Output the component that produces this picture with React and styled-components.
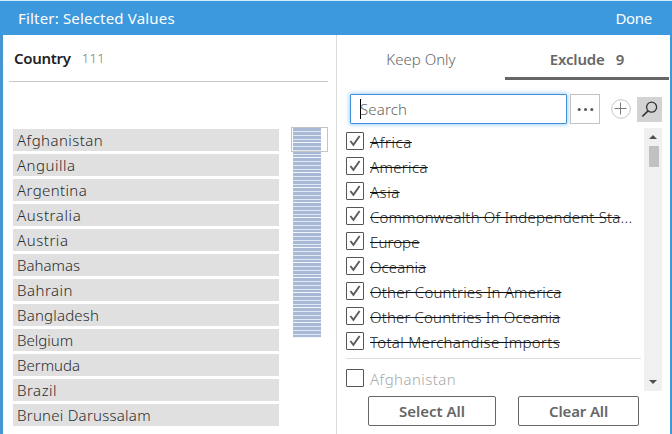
import React from "react";
import styled, { createGlobalStyle } from "styled-components";

const Global = createGlobalStyle`
  * { box-sizing: border-box; }
  body { margin: 0; background: #fff; overflow: hidden; }
  button, input { font-family: inherit; }
`;

const Dialog = styled.div`
  width: 672px;
  height: 434px;
  display: flex;
  flex-direction: column;
  border-top: 1px solid #cdf0fb;
  background: #fff;
  font-family: "Noto Sans", "Open Sans", sans-serif;
  font-size: 15px;
  color: #2c2c2c;
  overflow: hidden;
  white-space: nowrap;
`;

const Header = styled.header`
  height: 34px;
  flex: none;
  display: flex;
  justify-content: space-between;
  align-items: center;
  padding: 0 20px 0 18px;
  background: #3d99dd;
  color: #fff;
`;

const Txt = styled.span`
  display: block;
  flex: none;
  font-size: ${(p) => p.$size || 15}px;
  font-weight: ${(p) => p.$weight || 300};
  letter-spacing: ${(p) => p.$ls || 0}px;
  color: ${(p) => p.$color || "inherit"};
`;

const Struck = styled(Txt)`
  text-decoration: line-through #111 1px;
`;

const Body = styled.main`
  flex: 1;
  min-height: 0;
  display: flex;
  border-left: 3px solid #4596d0;
  border-right: 2px solid #3d99d6;
`;

const Left = styled.section`
  width: 333px;
  flex: none;
  padding: 0 8px 0 6px;
`;

const Title = styled.div`
  height: 47px;
  display: flex;
  align-items: center;
  gap: 11px;
  padding: 0 0 0 5px;
  border-bottom: 1px solid #c8c8c8;
`;

const Preview = styled.div`
  display: flex;
  align-items: flex-start;
  padding: 47px 0 0 4px;
`;

const Values = styled.ul`
  width: 266px;
  margin: 0;
  padding: 0;
  list-style: none;
  display: grid;
  gap: 3px;
`;

const Value = styled.li`
  height: 22px;
  display: flex;
  align-items: center;
  padding: 0 0 0 4px;
  background: #e0e0e0;
`;

const MiniMap = styled.div`
  position: relative;
  width: 28px;
  height: 210px;
  margin: -1px 0 0 14px;
  background: repeating-linear-gradient(
    #a7b9d4 0 3px, #dfe8f4 3px 4px,
    #a7b9d4 4px 7px, #dfe8f4 7px 8px,
    #a7b9d4 8px 11px, #dfe8f4 11px 12px,
    #a7b9d4 12px 14px, #f3f7fc 14px 15px
  );
`;

const Viewport = styled.div`
  position: absolute;
  left: -2px;
  top: -1px;
  width: 37px;
  height: 25px;
  border: 1px solid #c4c4c4;
`;

const Right = styled.section`
  flex: 1;
  min-width: 0;
  border-left: 1px solid #dcdcdc;
  display: flex;
  flex-direction: column;
`;

const Tabs = styled.div`
  height: 45px;
  flex: none;
  display: grid;
  grid-template-columns: 168px 164px;
`;

const Tab = styled.button`
  border: 0;
  border-bottom: 3px solid ${(p) => (p.$active ? "#666" : "transparent")};
  background: none;
  padding: 6px 0 0;
  display: flex;
  align-items: center;
  justify-content: center;
  gap: 11px;
  color: #666;
`;

const Tools = styled.div`
  display: flex;
  align-items: center;
  flex: none;
  height: 30px;
  margin: 14px 0 0 13px;
`;

const SearchBox = styled.div`
  width: 217px;
  height: 30px;
  display: flex;
  align-items: center;
  padding-left: 9px;
  border: 1px solid #3c8fd8;
  border-radius: 1px;
  box-shadow: 0 0 4px 1px #a6d4f8;
`;

const Caret = styled.i`
  width: 1px;
  height: 20px;
  margin-right: -1px;
  background: #000;
`;

const More = styled.button`
  width: 30px;
  height: 30px;
  margin-left: 3px;
  padding: 0;
  border: 1px solid #c2c2c2;
  background: #fff;
`;

const Add = styled.button`
  width: 20px;
  height: 20px;
  margin-left: 11px;
  padding: 0;
  border: 0;
  background: none;
`;

const Find = styled.button`
  width: 25px;
  height: 25px;
  margin-left: 6px;
  padding: 0;
  border: 0;
  background: #d3d3d3;
`;

const Icon = styled.svg`
  display: block;
  fill: none;
`;

const ListArea = styled.div`
  height: 264px;
  flex: none;
  margin-top: 4px;
  display: flex;
  padding: 0 8px 0 9px;
`;

const Options = styled.div`
  width: 295px;
  padding-top: 4px;
`;

const Option = styled.label`
  height: 25px;
  display: flex;
  align-items: flex-start;
  line-height: 21px;
  color: ${(p) => (p.$dim ? "#a8a8a8" : "#222")};
`;

const Box = styled.span`
  width: 18px;
  height: 18px;
  flex: none;
  margin-right: 6px;
  border: 1px solid #555;
  border-radius: 1px;
  background: #fff;
`;

const Rule = styled.hr`
  height: 1px;
  margin: 1px 0 10px;
  border: 0;
  background: #dedede;
`;

const ScrollBar = styled.div`
  width: 18px;
  height: 263px;
  margin-left: 3px;
  background: #f0f0f0;
  display: flex;
  flex-direction: column;
  align-items: center;
`;

const Arrow = styled.i`
  width: 0;
  height: 0;
  margin: ${(p) => (p.$down ? "auto 0 7px" : "7px 0 7px")};
  border: 4px solid transparent;
  border-${(p) => (p.$down ? "top" : "bottom")}: 4px solid #505050;
  border-${(p) => (p.$down ? "bottom" : "top")}: 0;
`;

const Thumb = styled.div`
  width: 10px;
  height: 21px;
  margin-left: 2px;
  background: #c1c1c1;
`;

const Actions = styled.div`
  display: flex;
  flex: none;
  margin: 4px 0 0 31px;
  gap: 22px;
`;

const Action = styled.button`
  width: ${(p) => p.$w}px;
  height: 30px;
  padding: 0;
  display: flex;
  align-items: center;
  justify-content: center;
  border: 1px solid #666;
  border-radius: 2px;
  background: #fff;
  color: #666;
`;

// Each entry pairs a label with its tracking in pixels.
const countries = [
  ["Afghanistan", 0.45], ["Anguilla", 0.5], ["Argentina", 0.38],
  ["Australia", 0.6], ["Austria", 0.55], ["Bahamas", 0],
  ["Bahrain", 0.5], ["Bangladesh", 0.2], ["Belgium", 0],
  ["Bermuda", 0], ["Brazil", 0.5], ["Brunei Darussalam", 0.25],
];

const excluded = [
  ["Africa", 0.6], ["America", 0.35], ["Asia", 0.5],
  ["Commonwealth Of Independent Sta", 0.17, "..."],
  ["Europe", 0.1], ["Oceania", 0.1], ["Other Countries In America", 0.2],
  ["Other Countries In Oceania", 0.15], ["Total Merchandise Imports", 0.32],
];

function Check({ checked }) {
  return (
    <Box>
      {checked && (
        <Icon width="16" height="16" viewBox="0 0 16 16">
          <path d="M3.4 8 6.4 11.8 12.6 3" stroke="#5c5c5c" strokeWidth="1.9" />
        </Icon>
      )}
    </Box>
  );
}

export default function App() {
  return (
    <Dialog>
      <Global />
      <Header>
        <Txt $weight={400} $ls={0.18}>Filter: Selected Values</Txt>
        <Txt $weight={400} $ls={-0.3}>Done</Txt>
      </Header>
      <Body>
        <Left>
          <Title>
            <Txt $weight={600} $ls={-0.3} $color="#222">Country</Txt>
            <Txt $size={13} $ls={0.3} $color="#777">111</Txt>
          </Title>
          <Preview>
            <Values>
              {countries.map(([name, ls]) => (
                <Value key={name}><Txt $ls={ls}>{name}</Txt></Value>
              ))}
            </Values>
            <MiniMap><Viewport /></MiniMap>
          </Preview>
        </Left>
        <Right>
          <Tabs>
            <Tab><Txt $color="#666">Keep Only</Txt></Tab>
            <Tab $active>
              <Txt $weight={600} $ls={-0.15}>Exclude</Txt>
              <Txt $weight={600}>9</Txt>
            </Tab>
          </Tabs>
          <Tools>
            <SearchBox><Caret /><Txt $ls={0.15} $color="#666">Search</Txt></SearchBox>
            <More>
              <Icon width="28" height="28" viewBox="0 0 28 28">
                <g fill="#555">
                  <circle cx="8.2" cy="14.5" r="1.5" />
                  <circle cx="14.5" cy="14.5" r="1.5" />
                  <circle cx="20.8" cy="14.5" r="1.5" />
                </g>
              </Icon>
            </More>
            <Add>
              <Icon width="20" height="20" viewBox="0 0 20 20">
                <circle cx="10" cy="10" r="9.3" stroke="#c4c4c4" />
                <path d="M3.5 9.5h12M9.5 3.5v12" stroke="#777" />
              </Icon>
            </Add>
            <Find>
              <Icon width="25" height="25" viewBox="0 0 25 25">
                <circle cx="14.6" cy="10.2" r="5" stroke="#333" strokeWidth="1.3" />
                <path d="m11 13.8-5.7 5.7" stroke="#333" strokeWidth="1.7" />
              </Icon>
            </Find>
          </Tools>
          <ListArea>
            <Options>
              {excluded.map(([name, ls, tail]) => (
                <Option key={name}>
                  <Check checked />
                  <Struck as="s" $ls={ls}>{name}</Struck>
                  {tail && <Txt $ls={0.3}>{tail}</Txt>}
                </Option>
              ))}
              <Rule />
              <Option $dim><Check /><Txt $ls={0.45}>Afghanistan</Txt></Option>
            </Options>
            <ScrollBar><Arrow /><Thumb /><Arrow $down /></ScrollBar>
          </ListArea>
          <Actions>
            <Action $w={128}><Txt $weight={600}>Select All</Txt></Action>
            <Action $w={121}><Txt $weight={600} $ls={-0.15}>Clear All</Txt></Action>
          </Actions>
        </Right>
      </Body>
    </Dialog>
  );
}
